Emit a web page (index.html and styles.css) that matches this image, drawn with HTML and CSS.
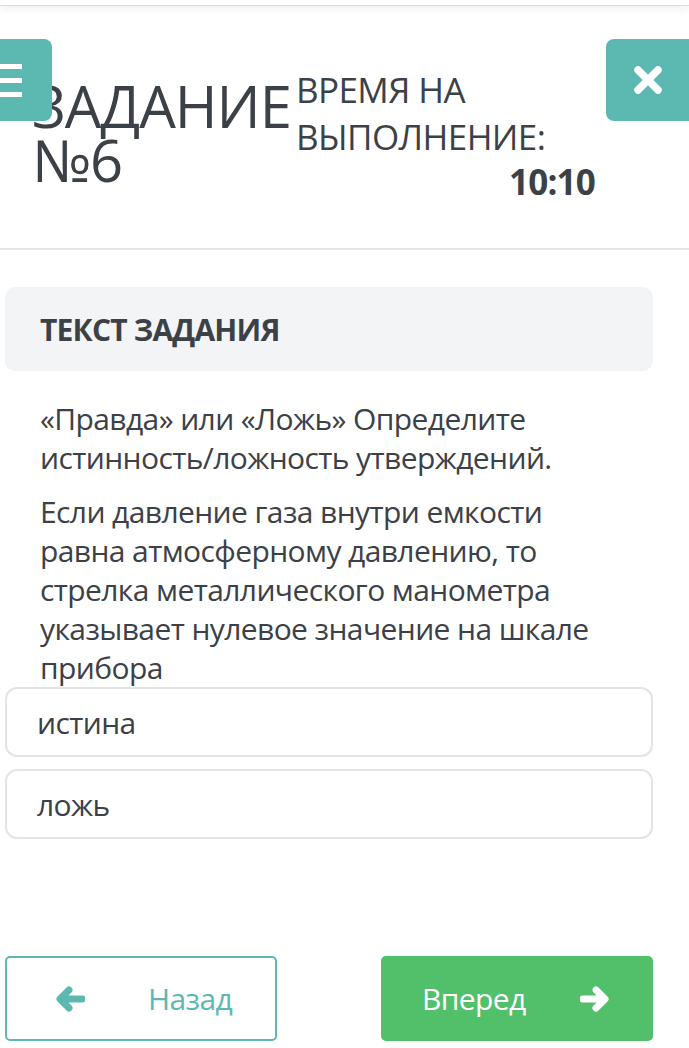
FILE: index.html
```html
<!DOCTYPE html>
<html lang="ru">
<head>
    <meta charset="UTF-8">
    <meta name="viewport" content="width=device-width, initial-scale=1.0">
    <title>Задание №6</title>
    <link rel="stylesheet" href="styles.css">
</head>
<body>
    <div class="top-shadow"></div>

    <div class="header">
        <div class="menu-btn">
            <span></span><span></span><span></span>
        </div>
        <h1 class="title">ЗАДАНИЕ №6</h1>
        <div class="timer">
            <div class="timer-label">ВРЕМЯ НА ВЫПОЛНЕНИЕ:</div>
            <div class="timer-value">10:10</div>
        </div>
        <div class="close-btn">
            <svg width="32" height="32" viewBox="0 0 32 32">
                <path d="M6 6 L26 26 M26 6 L6 26" stroke="#fff" stroke-width="7.5" stroke-linecap="round"/>
            </svg>
        </div>
    </div>

    <div class="task">
        <div class="task-head">ТЕКСТ ЗАДАНИЯ</div>
        <div class="task-text">
            <p>«Правда» или «Ложь» Определите истинность/ложность утверждений.</p>
            <p>Если давление газа внутри емкости равна атмосферному давлению, то стрелка металлического манометра указывает нулевое значение на шкале прибора</p>
        </div>
        <div class="options">
            <div class="option">истина</div>
            <div class="option">ложь</div>
        </div>
    </div>

    <div class="nav">
        <div class="nav-btn back">
            <svg width="30" height="26" viewBox="0 0 30 26">
                <path d="M27 13 H6 M14 4 L5 13 L14 22" fill="none" stroke="#5bb9b2" stroke-width="7" stroke-linecap="round" stroke-linejoin="round"/>
            </svg>
            <span>Назад</span>
        </div>
        <div class="nav-btn next">
            <span>Вперед</span>
            <svg width="30" height="26" viewBox="0 0 30 26">
                <path d="M3 13 H24 M16 4 L25 13 L16 22" fill="none" stroke="#fff" stroke-width="7" stroke-linecap="round" stroke-linejoin="round"/>
            </svg>
        </div>
    </div>
</body>
</html>
```

FILE: styles.css
```css
body {
    margin: 0;
    background: #fff;
    font-family: "Open Sans", "Noto Sans", sans-serif;
    color: #3c4148;
}
.top-shadow {
    height: 5px;
    border-bottom: 1px solid #dcdcdc;
    box-shadow: 0 3px 8px rgba(0,0,0,0.08);
}
.header {
    position: relative;
    display: flex;
    align-items: flex-start;
    padding: 60px 0 0 32px;
    height: 182px;
    border-bottom: 2px solid #e6e6e6;
}
.title {
    margin: 13px 0 0;
    width: 264px;
    font-size: 58px;
    font-weight: 400;
    line-height: 54px;
    letter-spacing: -1px;
}
.timer {
    width: 299px;
}
.timer-label {
    font-size: 35px;
    line-height: 47px;
    letter-spacing: -0.6px;
}
.timer-value {
    text-align: right;
    font-size: 35px;
    font-weight: 700;
    line-height: 43px;
    letter-spacing: -0.8px;
}
.menu-btn {
    position: absolute;
    left: -20px;
    top: 33px;
    width: 72px;
    height: 82px;
    background: #5bb9b2;
    border-radius: 8px;
    display: flex;
    flex-direction: column;
    justify-content: center;
    align-items: flex-end;
    gap: 9px;
    padding-right: 30px;
    box-sizing: border-box;
}
.menu-btn span {
    display: block;
    width: 40px;
    height: 5px;
    background: #fff;
}
.close-btn {
    position: absolute;
    left: 606px;
    top: 33px;
    width: 100px;
    height: 82px;
    background: #5bb9b2;
    border-radius: 8px;
    display: flex;
    align-items: center;
    padding-left: 26px;
    box-sizing: border-box;
}
.task {
    padding: 37px 36px 0 5px;
}
.task-head {
    background: #f3f4f6;
    border-radius: 10px;
    height: 84px;
    display: flex;
    align-items: center;
    padding-left: 35px;
    font-size: 30px;
    font-weight: 700;
    letter-spacing: -0.8px;
}
.task-text {
    padding: 28px 50px 0 35px;
}
.task-text p {
    margin: 0 0 15px;
    font-size: 30px;
    line-height: 39px;
    letter-spacing: -0.6px;
}
.options {
    display: flex;
    flex-direction: column;
    gap: 12px;
    margin-top: -15px;
}
.option {
    height: 66px;
    border: 2px solid #e4e4e4;
    border-radius: 12px;
    display: flex;
    align-items: center;
    padding-left: 30px;
    font-size: 30px;
    letter-spacing: -0.6px;
}
.nav {
    display: flex;
    justify-content: space-between;
    padding: 117px 36px 0 5px;
}
.nav-btn {
    width: 272px;
    height: 85px;
    box-sizing: border-box;
    border-radius: 5px;
    display: flex;
    align-items: center;
    font-size: 30px;
    letter-spacing: -0.6px;
}
.nav-btn.back {
    border: 2px solid #5bb9b2;
    color: #5bb9b2;
    padding-left: 48px;
    gap: 63px;
}
.nav-btn.next {
    background: #52c06a;
    color: #fff;
    padding-left: 41px;
    gap: 54px;
}
```
